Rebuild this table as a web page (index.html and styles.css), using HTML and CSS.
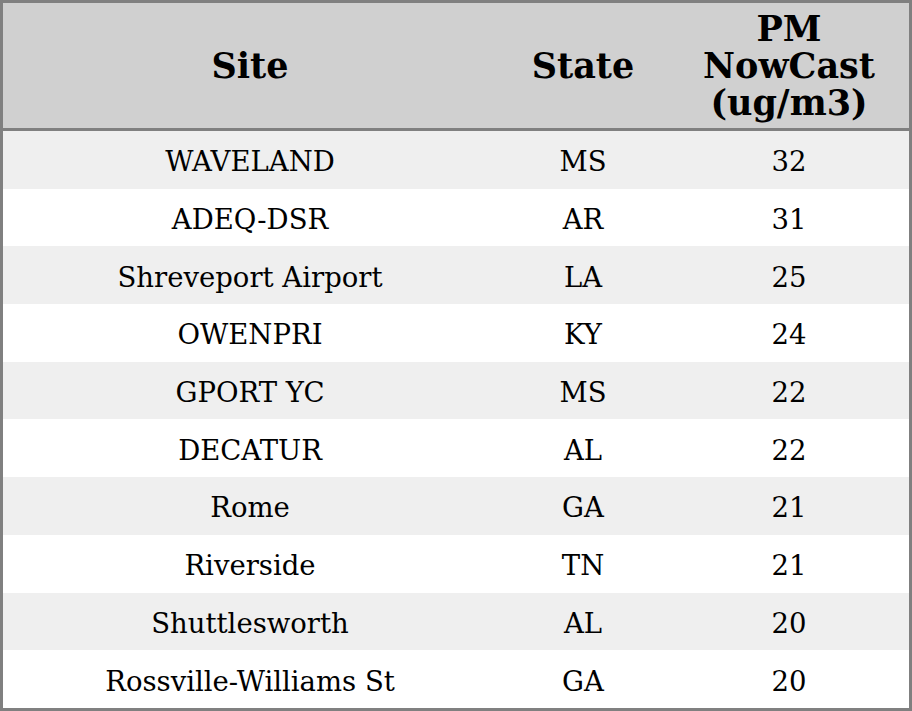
FILE: index.html
```html
<!DOCTYPE html>
<html>
<head>
<meta charset="utf-8">
<link rel="stylesheet" href="styles.css">
</head>
<body>
<table class="aq">
  <colgroup>
    <col class="c-site">
    <col class="c-state">
    <col class="c-pm">
  </colgroup>
  <thead>
    <tr><th>Site</th><th>State</th><th>PM<br>NowCast<br>(ug/m3)</th></tr>
  </thead>
  <tbody>
    <tr><td>WAVELAND</td><td>MS</td><td>32</td></tr>
    <tr><td>ADEQ-DSR</td><td>AR</td><td>31</td></tr>
    <tr><td>Shreveport Airport</td><td>LA</td><td>25</td></tr>
    <tr><td>OWENPRI</td><td>KY</td><td>24</td></tr>
    <tr><td>GPORT YC</td><td>MS</td><td>22</td></tr>
    <tr><td>DECATUR</td><td>AL</td><td>22</td></tr>
    <tr><td>Rome</td><td>GA</td><td>21</td></tr>
    <tr><td>Riverside</td><td>TN</td><td>21</td></tr>
    <tr><td>Shuttlesworth</td><td>AL</td><td>20</td></tr>
    <tr><td>Rossville-Williams St</td><td>GA</td><td>20</td></tr>
  </tbody>
</table>
</body>
</html>
```
FILE: styles.css
```css
html, body {
  margin: 0;
  padding: 0;
  background: #ffffff;
}
.aq {
  width: 912px;
  border-collapse: separate;
  border-spacing: 0;
  table-layout: fixed;
  border: 3px solid #808080;
  font-family: "DejaVu Serif", serif;
  color: #000;
}
.c-site { width: 494px; }
.c-state { width: 172px; }
.c-pm { width: 240px; }
.aq th {
  background: #d0d0d0;
  font-size: 35px;
  font-weight: bold;
  line-height: 37px;
  height: 125px;
  padding: 0;
  text-align: center;
  border-bottom: 3px solid #808080;
}
.aq tbody tr {
  height: 57.7px;
}
.aq td {
  font-size: 27.5px;
  padding: 3px 0 0 0;
  text-align: center;
}
.aq tbody tr:nth-child(odd) td {
  background: #efefef;
}
```
